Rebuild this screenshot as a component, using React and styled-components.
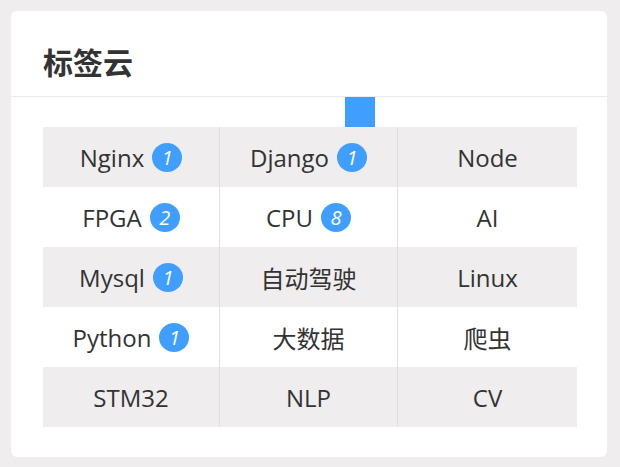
import React from 'react';
import styled, { createGlobalStyle } from 'styled-components';

const GlobalStyle = createGlobalStyle`
  body {
    margin: 0;
    background: #efeded;
    font-family: "Open Sans", "Noto Sans CJK SC", sans-serif;
  }
`;

const tags = [
  { name: 'Nginx', count: 1 },
  { name: 'Django', count: 1 },
  { name: 'Node' },
  { name: 'FPGA', count: 2 },
  { name: 'CPU', count: 8 },
  { name: 'AI' },
  { name: 'Mysql', count: 1 },
  { name: '自动驾驶' },
  { name: 'Linux' },
  { name: 'Python', count: 1 },
  { name: '大数据' },
  { name: '爬虫' },
  { name: 'STM32' },
  { name: 'NLP' },
  { name: 'CV' },
];

const App = () => {
  const rows = [];
  for (let i = 0; i < tags.length; i += 3) rows.push(tags.slice(i, i + 3));

  return (
    <Page>
      <GlobalStyle />
      <Card>
        <Header>
          <Title>标签云</Title>
        </Header>
        <Body>
          <Marker />
          <Table>
            {rows.map((row, r) => (
              <Row key={r} $striped={r % 2 === 0}>
                {row.map((tag) => (
                  <Cell key={tag.name}>
                    {tag.name}
                    {tag.count && <Badge>{tag.count}</Badge>}
                  </Cell>
                ))}
              </Row>
            ))}
          </Table>
        </Body>
      </Card>
    </Page>
  );
};

export default App;

const Page = styled.div`
  padding: 11px 13px 10px 11px;
`;
const Card = styled.div`
  background: #fff;
  border-radius: 6px;
  height: 446px;
  box-sizing: border-box;
`;
const Header = styled.div`
  height: 86px;
  border-bottom: 1px solid #ebebeb;
  padding-left: 32px;
  display: flex;
  align-items: center;
  box-sizing: border-box;
  padding-top: 14px;
`;
const Title = styled.h2`
  margin: 0;
  font-size: 30px;
  font-weight: 700;
  color: #333;
  font-family: "Noto Sans CJK SC", sans-serif;
`;
const Body = styled.div`
  padding: 0 30px 30px 32px;
  display: flex;
  flex-direction: column;
`;
const Marker = styled.div`
  width: 30px;
  height: 30px;
  background: #409eff;
  margin-left: 302px;
`;
const Table = styled.div`
  display: flex;
  flex-direction: column;
`;
const Row = styled.div`
  display: grid;
  grid-template-columns: 177px 178px 179px;
  height: 60px;
  background: ${(p) => (p.$striped ? '#efeded' : '#fff')};
`;
const Cell = styled.div`
  display: flex;
  align-items: center;
  justify-content: center;
  gap: 8px;
  font-size: 24px;
  color: #333;
  &:not(:last-child) {
    border-right: 1px solid #e0e0e0;
  }
`;
const Badge = styled.span`
  display: inline-flex;
  align-items: center;
  justify-content: center;
  width: 30px;
  height: 29px;
  border-radius: 50%;
  background: #409eff;
  color: #fff;
  font-size: 20px;
  font-style: italic;
`;
